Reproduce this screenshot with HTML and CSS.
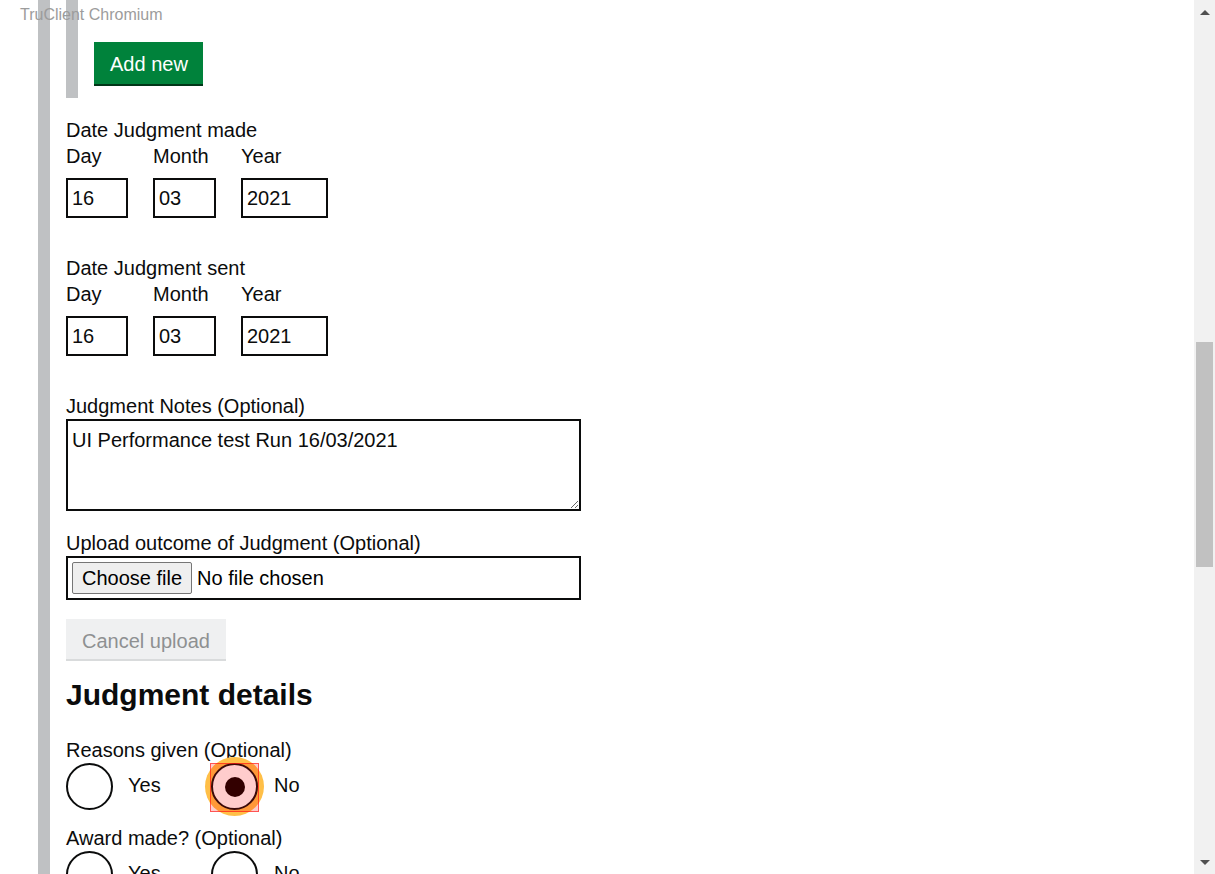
FILE: index.html
```html
<!DOCTYPE html>
<html lang="en">
<head>
<meta charset="utf-8">
<title>Judgment</title>
<link rel="stylesheet" href="styles.css">
</head>
<body>
<div class="window">
  <div class="page">
    <div class="rail"></div>
    <main class="content">
      <div class="repeat">
        <button class="btn-green" type="button">Add new</button>
      </div>

      <fieldset class="date-group first">
        <legend class="label">Date Judgment made</legend>
        <div class="date-row">
          <div class="date-item"><label class="label">Day</label><input class="inp w-day" value="16"></div>
          <div class="date-item"><label class="label">Month</label><input class="inp w-month" value="03"></div>
          <div class="date-item"><label class="label">Year</label><input class="inp w-year" value="2021"></div>
        </div>
      </fieldset>

      <fieldset class="date-group">
        <legend class="label">Date Judgment sent</legend>
        <div class="date-row">
          <div class="date-item"><label class="label">Day</label><input class="inp w-day" value="16"></div>
          <div class="date-item"><label class="label">Month</label><input class="inp w-month" value="03"></div>
          <div class="date-item"><label class="label">Year</label><input class="inp w-year" value="2021"></div>
        </div>
      </fieldset>

      <div class="notes-group">
        <label class="label">Judgment Notes (Optional)</label>
        <textarea class="notes">UI Performance test Run 16/03/2021</textarea>
      </div>

      <div class="upload-group">
        <label class="label">Upload outcome of Judgment (Optional)</label>
        <div class="filebox">
          <span class="choose">Choose file</span>
          <span class="nofile">No file chosen</span>
        </div>
      </div>

      <div class="cancel-row"><button class="btn-cancel" type="button" disabled>Cancel upload</button></div>

      <h2 class="heading">Judgment details</h2>

      <div class="radio-group">
        <div class="label">Reasons given (Optional)</div>
        <div class="radios">
          <div class="radio-item first-item"><span class="radio"></span><span class="radio-text">Yes</span></div>
          <div class="radio-item"><span class="radio checked focused"><span class="highlight"></span></span><span class="radio-text">No</span></div>
        </div>
      </div>

      <div class="radio-group second">
        <div class="label">Award made? (Optional)</div>
        <div class="radios">
          <div class="radio-item first-item"><span class="radio"></span><span class="radio-text">Yes</span></div>
          <div class="radio-item"><span class="radio"></span><span class="radio-text">No</span></div>
        </div>
      </div>
    </main>
  </div>
  <div class="scrollbar">
    <div class="sb-arrow up"></div>
    <div class="sb-track"><div class="sb-thumb"></div></div>
    <div class="sb-arrow down"></div>
  </div>
  <div class="tc-label">TruClient Chromium</div>
</div>
</body>
</html>
```
FILE: styles.css
```css
* { box-sizing: border-box; }
html, body {
  margin: 0;
  padding: 0;
  height: 874px;
  overflow: hidden;
  background: #fff;
}
body {
  font-family: "Liberation Sans", Arial, sans-serif;
  font-size: 20px;
  line-height: 26px;
  color: #0b0c0c;
}
.window {
  position: relative;
  display: flex;
  height: 874px;
}
.page {
  flex: 1;
  display: flex;
  padding-left: 38px;
  overflow: hidden;
}
.rail {
  width: 12px;
  background: #bfc1c3;
  flex: none;
}
.content {
  margin-left: 16px;
  display: flex;
  flex-direction: column;
  align-items: flex-start;
}
.repeat {
  border-left: 12px solid #bfc1c3;
  padding: 42px 0 12px 16px;
}
.btn-green {
  font-family: inherit;
  font-size: 20px;
  line-height: 26px;
  color: #fff;
  background: #00823b;
  border: 0;
  border-radius: 0;
  padding: 9px 15px 7px 16px;
  box-shadow: 0 2px 0 #003618;
  margin: 0 0 2px;
  display: block;
}
.label {
  display: block;
  font-size: 20px;
  line-height: 26px;
  color: #0b0c0c;
  padding: 0;
}
fieldset {
  border: 0;
  margin: 0;
  padding: 0;
  min-width: 0;
}
.date-group { margin-top: 37px; }
.date-group.first { margin-top: 19px; }
.date-row {
  display: flex;
  gap: 25px;
}
.date-item {
  display: flex;
  flex-direction: column;
}
.date-item .label { margin-bottom: 9px; }
.inp {
  height: 40px;
  border: 2px solid #0b0c0c;
  border-radius: 0;
  padding: 0 4px;
  font-family: inherit;
  font-size: 20px;
  color: #0b0c0c;
  background: #fff;
  outline: none;
}
.w-day { width: 62px; }
.w-month { width: 63px; }
.w-year { width: 87px; }
.notes-group { margin-top: 37px; }
.notes {
  display: block;
  width: 515px;
  height: 92px;
  border: 2px solid #0b0c0c;
  border-radius: 0;
  padding: 6px 4px;
  font-family: inherit;
  font-size: 20px;
  line-height: 26px;
  color: #0b0c0c;
  resize: vertical;
  outline: none;
}
.upload-group { margin-top: 19px; }
.filebox {
  width: 515px;
  height: 44px;
  border: 2px solid #0b0c0c;
  padding: 0 4px;
  display: flex;
  align-items: center;
}
.choose {
  height: 32px;
  line-height: 30px;
  padding: 0 9px;
  background: #efefef;
  border: 1px solid #767676;
  border-radius: 2px;
  color: #000;
}
.nofile {
  margin-left: 5px;
  color: #000;
}
.cancel-row { margin-top: 19px; }
.btn-cancel {
  display: block;
  font-family: inherit;
  font-size: 20px;
  line-height: 26px;
  color: #8e9091;
  background: #eff0f1;
  border: 0;
  border-radius: 0;
  padding: 9px 16px 5px;
  box-shadow: 0 2px 0 #d9dbdc;
  margin: 0;
}
.heading {
  font-size: 30px;
  line-height: 34px;
  font-weight: 700;
  margin: 19px 0 0;
  color: #0b0c0c;
}
.radio-group { margin-top: 25px; }
.radio-group.second { margin-top: 15px; }
.radios {
  display: flex;
}
.radio-item {
  display: flex;
  align-items: center;
}
.radio-item.first-item { width: 145px; }
.radio {
  position: relative;
  width: 47px;
  height: 47px;
  border: 2px solid #0b0c0c;
  border-radius: 50%;
  background: #fff;
  flex: none;
}
.radio-text {
  margin-left: 15px;
  margin-bottom: 4px;
}
.radio-item + .radio-item .radio-text { margin-left: 16px; }
.radio.checked::after {
  content: "";
  position: absolute;
  left: 11.5px;
  top: 11.5px;
  width: 20px;
  height: 20px;
  border-radius: 50%;
  background: #000;
}
.radio.focused {
  box-shadow: 0 0 0 6px #ffbf47;
}
.highlight {
  position: absolute;
  left: -3px;
  top: -2px;
  width: 49px;
  height: 49px;
  background: rgba(255, 0, 0, 0.2);
  border: 1px solid rgba(255, 20, 20, 0.65);
  z-index: 2;
}
.scrollbar {
  width: 21px;
  flex: none;
  background: #f1f1f1;
  display: flex;
  flex-direction: column;
}
.sb-arrow {
  height: 21px;
  display: flex;
  align-items: center;
  justify-content: center;
}
.sb-arrow::before {
  content: "";
  width: 0;
  height: 0;
  border-left: 5px solid transparent;
  border-right: 5px solid transparent;
}
.sb-arrow.up::before { border-bottom: 5px solid #505050; margin-top: 4px; }
.sb-arrow.down::before { border-top: 5px solid #505050; margin-bottom: 2px; }
.sb-track {
  flex: 1;
  padding: 321px 2px 0;
}
.sb-thumb {
  height: 225px;
  background: #c1c1c1;
}
.tc-label {
  position: absolute;
  left: 20px;
  top: 6px;
  font-family: "Liberation Sans", Arial, sans-serif;
  font-size: 16px;
  line-height: 18px;
  color: #9c9c9c;
}
```
